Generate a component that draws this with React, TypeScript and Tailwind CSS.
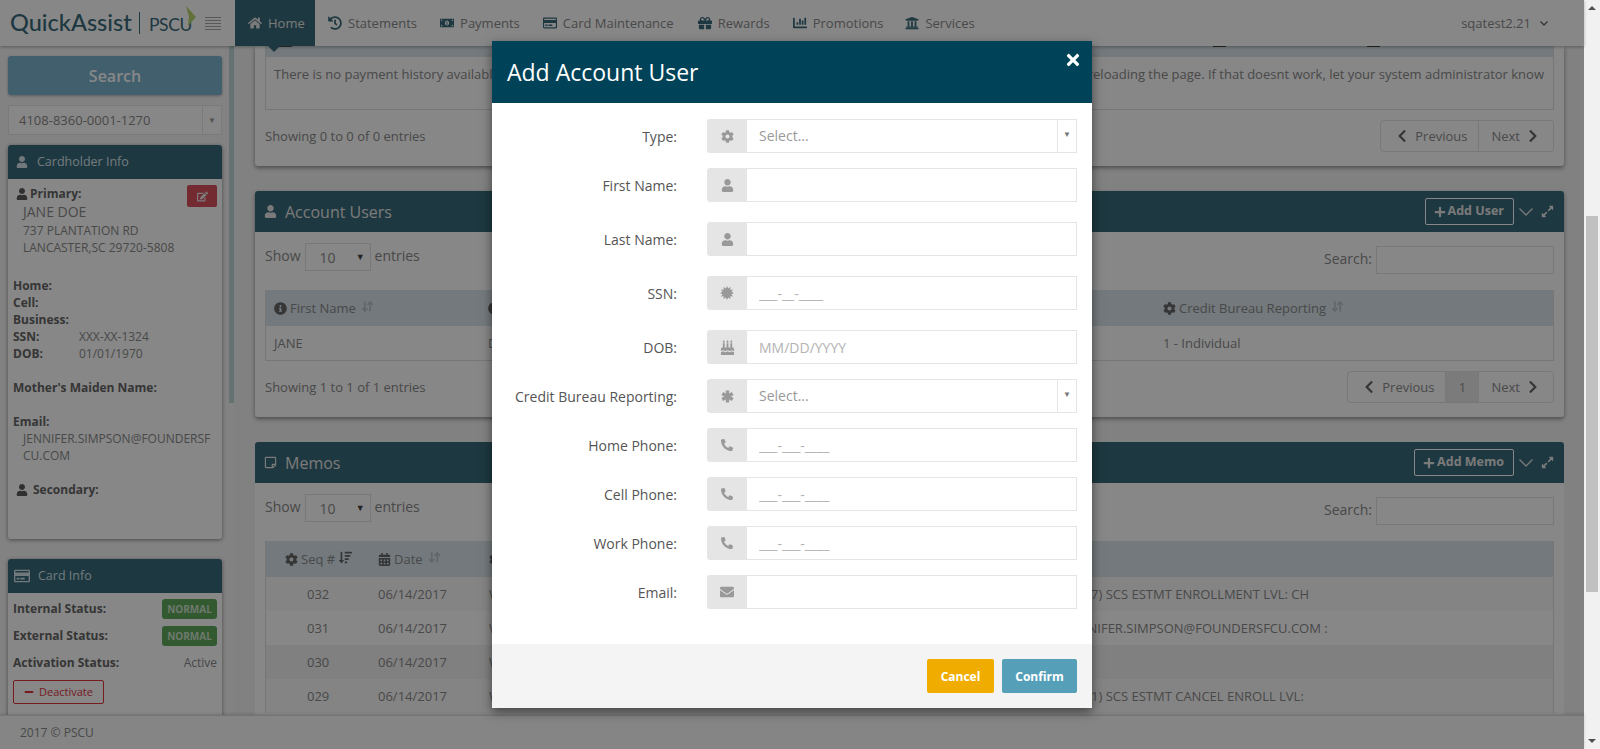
import React from "react";
import {
  FaUser, FaCog, FaBirthdayCake, FaPhone, FaEnvelope, FaHome, FaHistory,
  FaMoneyBillAlt, FaGift, FaChartBar, FaUniversity, FaEdit, FaInfoCircle, FaCalendarAlt,
  FaSortAmountDown, FaPlus, FaExpandAlt, FaChevronLeft, FaChevronRight, FaTimes, FaRegStickyNote, FaMinus, FaRegCreditCard,
} from "react-icons/fa";
import { ArrowDownUp } from "lucide-react";

const nav: [React.ReactNode, string, string][] = [
  [<FaHistory />, "Statements", "ml-[13px] mr-[11px]"],
  [<FaMoneyBillAlt />, "Payments", "ml-[12px] mr-[12px]"],
  [<FaRegCreditCard />, "Card Maintenance", "ml-[11px] mr-[12px]"],
  [<FaGift />, "Rewards", "ml-[12px] mr-[12px]"],
  [<FaChartBar />, "Promotions", "ml-[11px] mr-[11px]"],
  [<FaUniversity />, "Services", "ml-[11px] mr-0"],
];

function Chevron({ w, h, cls }: { w: number; h: number; cls: string }) {
  return (
    <svg width={w} height={h} viewBox={`0 0 ${w} ${h}`} className={cls} fill="none" stroke="currentColor" strokeWidth="1.3">
      <polyline points={`0.5,0.5 ${w / 2},${h - 1} ${w - 0.5},0.5`} />
    </svg>
  );
}

function Cert() {
  const pts: string[] = [];
  for (let i = 0; i < 24; i++) {
    const r = i % 2 === 0 ? 7 : 4.6;
    const a = (Math.PI * i) / 12;
    pts.push(`${7 + r * Math.sin(a)},${7 - r * Math.cos(a)}`);
  }
  return (
    <svg width="14" height="14" viewBox="0 0 14 14" fill="currentColor">
      <polygon points={pts.join(" ")} />
    </svg>
  );
}

function Star() {
  return (
    <svg width="13" height="13" viewBox="0 0 13 13" stroke="currentColor" strokeWidth="3.4">
      <line x1="6.5" y1="0.5" x2="6.5" y2="12.5" />
      <line x1="1.3" y1="3.5" x2="11.7" y2="9.5" />
      <line x1="1.3" y1="9.5" x2="11.7" y2="3.5" />
    </svg>
  );
}

function Sort() {
  return <ArrowDownUp size={13} strokeWidth={3} className="text-[#b4c2ca] ml-[2px] -mt-1" />;
}

function PanelHead({ icon, title, btn }: { icon: React.ReactNode; title: string; btn: string }) {
  return (
    <div className="h-[41px] bg-[#386a7a] flex items-center pl-[9px] pr-[10px] text-[#e6e6e6]">
      <span className="text-[13px] w-[21px] shrink-0">{icon}</span>
      <span className="text-[16px] flex-1">{title}</span>
      <span className="h-[27px] pl-[8px] pr-[9px] border border-white rounded-[2px] flex items-center gap-[2px] text-[12.5px] font-bold">
        <FaPlus className="text-[12px]" /> {btn}
      </span>
      <Chevron w={14} h={8} cls="ml-[5px]" />
      <FaExpandAlt className="text-[13px] ml-[8px]" />
    </div>
  );
}

function LengthRow() {
  return (
    <div className="flex justify-between px-[10px] pt-[11px]">
      <div className="flex items-center h-[28px] text-[14px]">
        <span className="pb-[4px]">Show</span>
        <span className="mx-[4px] w-[66px] h-[28px] border border-[#e2e2e2] flex items-center justify-between pl-[14px] pr-[5px] text-[14px]">
          <span className="pt-[1px]">10</span> <span className="text-[9px] text-[#444]">▼</span>
        </span>
        <span className="pb-[4px]">entries</span>
      </div>
      <div className="flex items-center mt-[3px] h-[28px] text-[14px]">
        <span className="mr-[4px] pb-[3px]">Search:</span>
        <span className="w-[178px] h-[28px] border border-[#e2e2e2]" />
      </div>
    </div>
  );
}

function Pager({ one }: { one?: boolean }) {
  return (
    <div className="flex h-[32px] border border-[#e2e2e2] rounded-[4px] text-[13px] text-[#8d8d8d]">
      <span className="flex items-center gap-[6px] pl-[14px] pr-[11px] border-r border-[#e2e2e2]">
        <FaChevronLeft className="text-[#666] text-[14px]" /> <span className="pt-px">Previous</span>
      </span>
      {one && <span className="w-[33px] pt-px flex items-center justify-center bg-[#e8e8e8] border-r border-[#e2e2e2]">1</span>}
      <span className="flex items-center gap-[6px] pl-[12px] pr-[13px]">
        <span className="pt-px">Next</span> <FaChevronRight className="text-[#666] text-[14px]" />
      </span>
    </div>
  );
}

function Side({ label, children }: { label: string; children?: React.ReactNode }) {
  return (
    <div className="flex h-[17px] leading-[17px] text-[12px]">
      <b className="w-[66px] shrink-0 font-bold text-[#666] whitespace-nowrap">{label}</b>
      <span>{children}</span>
    </div>
  );
}

function Status({ label, children }: { label: string; children: React.ReactNode }) {
  return (
    <div className="flex justify-between items-center h-[20px] mb-[7px]">
      <b className="text-[12px] font-bold text-[#666] pb-px">{label}</b>
      {children}
    </div>
  );
}

const Normal = () => (
  <span className="w-[55px] h-[20px] rounded-[3px] bg-[#5fa85c] text-[#cfe3cd] text-[10px] font-bold flex items-center justify-center">NORMAL</span>
);

function Field({ label, icon, ph, select, mb }: { label: string; icon: React.ReactNode; ph?: string; select?: boolean; mb: string }) {
  return (
    <div className={`flex items-center h-[34px] ${mb}`}>
      <label className="w-[170px] text-right text-[14px] text-[#555] mr-[30px] whitespace-nowrap pt-px">{label}</label>
      <div className="w-[370px] h-[34px] flex">
        <span className="w-[40px] shrink-0 bg-[#e5e5e5] rounded-l-[3px] flex items-center justify-center text-[#999] text-[13px]">{icon}</span>
        {select ? (
          <div className="flex-1 flex border border-l-0 border-[#e5e5e5] text-[14px] text-[#999]">
            <span className="flex-1 pl-[12px] leading-[31px] border-r border-[#e5e5e5]">{ph}</span>
            <span className="w-[18px] text-center text-[8px] leading-[28px] text-[#777]">▼</span>
          </div>
        ) : (
          <input
            readOnly
            placeholder={ph}
            className="flex-1 min-w-0 border border-l-0 border-[#e5e5e5] pl-[12px] pt-px text-[14px] placeholder:text-[#b3b3b3] outline-none bg-white"
          />
        )}
      </div>
    </div>
  );
}

const memos = [
  ["032", "bg-[#fafafa]", "7) SCS ESTMT ENROLLMENT LVL: CH", ""],
  ["031", "bg-white", "JENNIFER.SIMPSON@FOUNDERSFCU.COM :", "-ml-[24px]"],
  ["030", "bg-[#f1f1f1]", "", ""],
  ["029", "bg-[#fafafa]", "1) SCS ESTMT CANCEL ENROLL LVL:", ""],
];

export default function App() {
  return (
    <div className="relative h-[749px] w-[1600px] flex overflow-hidden font-['Open_Sans',sans-serif] text-[#8a8a8a]">
      <div className="relative w-[1584px] h-[749px] flex flex-col bg-[#f3f3f3]">
        {/* top bar */}
        <header className="relative z-10 h-[46px] shrink-0 bg-white flex items-center shadow-[0_1px_3px_rgba(0,0,0,0.3)]">
          <div className="w-[235px] shrink-0 flex items-center pl-[10px] text-[#386a7a]">
            <span className="w-[120px] font-['Lato',sans-serif] text-[23.5px] font-medium leading-none whitespace-nowrap">QuickAssist</span>
            <span className="w-px h-[22px] bg-[#386a7a] ml-[9px] mr-[9px]" />
            <span className="relative w-[41px] font-['Lato',sans-serif] text-[17.5px] tracking-[-0.4px] leading-none mt-[3px]">
              PSCU
              <svg viewBox="0 0 11 20" className="absolute -right-[7px] -top-[10px] w-[11px] h-[20px]">
                <path d="M0 0 L10 11 L2 20 L3 11 Z" fill="#b7d56d" />
              </svg>
            </span>
            <span className="ml-[15px] w-[16px] h-[13px] flex flex-col justify-between">
              <i className="block h-px bg-[#a8a8a8]" /><i className="block h-px bg-[#a8a8a8]" /><i className="block h-px bg-[#a8a8a8]" /><i className="block h-px bg-[#a8a8a8]" /><i className="block h-px bg-[#a8a8a8]" />
            </span>
          </div>
          <div className="relative w-[80px] h-[46px] bg-[#386a7a] text-[#e6e6e6] flex items-center pl-[13px] gap-[6px] text-[13px]">
            <FaHome className="text-[14px]" /> <span className="pt-px">Home</span>
            <span className="absolute left-[33px] top-[46px] border-x-[6px] border-x-transparent border-t-[6px] border-t-[#386a7a]" />
          </div>
          {nav.map(([ic, t, m]) => (
            <div key={t} className={`flex items-center gap-[6px] text-[13px] whitespace-nowrap ${m}`}>
              <span className="text-[#386a7a] text-[14px]">{ic}</span>
              <span className="pt-px">{t}</span>
            </div>
          ))}
          <div className="ml-auto mr-[36px] flex items-center text-[13px]">
            <span className="pt-px">sqatest2.21</span> <Chevron w={8} h={5} cls="ml-[9px] text-[#666]" />
          </div>
        </header>

        <div className="flex-1 min-h-0 flex overflow-hidden">
          {/* sidebar */}
          <aside className="relative w-[234px] shrink-0 overflow-hidden bg-[#f6f6f6] pl-[8px] pr-[12px] pt-[10px]">
            <div className="h-[39px] bg-[#7db4cf] rounded-[3px] flex items-center justify-center text-white text-[16px] font-semibold shadow-[0_1px_3px_rgba(0,0,0,0.3)]">Search</div>
            <div className="mt-[10px] h-[30px] flex border border-[#e8e8e8] bg-white text-[13px]">
              <span className="flex-1 pl-[10px] leading-[28px] border-r border-[#e8e8e8]">4108-8360-0001-1270</span>
              <span className="w-[18px] text-center text-[8px] leading-[27px] text-[#999]">▼</span>
            </div>

            <div className="mt-[10px] h-[394px] bg-white rounded-[3px] shadow-[0_1px_4px_rgba(0,0,0,0.45)] overflow-hidden">
              <div className="h-[34px] bg-[#386a7a] text-[#d8e5ec] flex items-center pl-[8px] text-[12.5px]">
                <FaUser className="text-[12px] mr-[9px]" /><span className="pt-px">Cardholder Info</span>
              </div>
              <div className="relative px-[5px] pt-[6px] text-[12px]">
                <span className="absolute right-[5px] top-[6px] w-[30px] h-[22px] rounded-[2px] bg-[#d9505e] flex items-center justify-center text-[#e8e8e8] text-[11px]"><FaEdit /></span>
                <div className="flex items-center h-[17px] ml-[3px] font-bold text-[#666] gap-[2px]"><FaUser className="text-[12px] text-[#5c5c5c]" />Primary:</div>
                <div className="ml-[10px] h-[19px] leading-[19px] text-[14px]">JANE DOE</div>
                <div className="ml-[10px] h-[17px] mt-px leading-[17px]">737 PLANTATION RD</div>
                <div className="ml-[10px] h-[17px] leading-[17px]">LANCASTER,SC 29720-5808</div>
                <div className="h-[21px]" />
                <Side label="Home:" />
                <Side label="Cell:" />
                <Side label="Business:" />
                <Side label="SSN:">XXX-XX-1324</Side>
                <Side label="DOB:">01/01/1970</Side>
                <div className="h-[17px]" />
                <Side label="Mother's Maiden Name:" />
                <div className="h-[17px]" />
                <Side label="Email:" />
                <div className="ml-[10px] leading-[17px] break-all w-[190px]">JENNIFER.SIMPSON@FOUNDERSFCU.COM</div>
                <div className="h-[17px]" />
                <div className="flex items-center h-[17px] ml-[3px] font-bold text-[#666] gap-[5px]"><FaUser className="text-[12px] text-[#5c5c5c]" />Secondary:</div>
              </div>
            </div>

            <div className="mt-[20px] h-[200px] bg-white rounded-[3px] shadow-[0_1px_4px_rgba(0,0,0,0.45)] overflow-hidden">
              <div className="h-[34px] bg-[#386a7a] text-[#d8e5ec] flex items-center pl-[6px] text-[12.5px]">
                <FaRegCreditCard className="text-[16px] w-[16px] mr-[8px]" /><span className="pt-px">Card Info</span>
              </div>
              <div className="px-[5px] pt-[6px]">
                <Status label="Internal Status:"><Normal /></Status>
                <Status label="External Status:"><Normal /></Status>
                <Status label="Activation Status:"><span className="text-[12px]">Active</span></Status>
                <div className="mt-[7px] w-[91px] h-[24px] border border-[#e0343f] rounded-[2px] flex items-center justify-center gap-[5px] text-[11px] text-[#e0343f]">
                  <FaMinus className="text-[10px]" />Deactivate
                </div>
              </div>
            </div>
            <span className="absolute right-0 top-0 w-[5px] h-[357px] bg-[#c0d6d8]" />
          </aside>

          {/* main */}
          <main className="flex-1 min-w-0 overflow-hidden pl-[21px] pr-[20px]">
            <section className="h-[120px] bg-white rounded-b-[3px] shadow-[0_2px_4px_rgba(0,0,0,0.4)] px-[10px] text-[13px]">
              <div className="h-[64px] border border-t-0 border-[#dfdfdf]">
                <div className="h-[11px] bg-[#d9e4ea] flex">
                  <i className="ml-[13px] block w-[13px] h-[1px] bg-[#555]" />
                  <i className="ml-[921px] block w-[13px] h-[1px] bg-[#444]" />
                  <i className="ml-[141px] block w-[13px] h-[1px] bg-[#444]" />
                </div>
                <div className="flex justify-between pl-[8px] pr-[9px] pt-[7px] leading-[20px]">
                  <span>There is no payment history available.</span>
                  <span>reloading the page. If that doesnt work, let your system administrator know</span>
                </div>
              </div>
              <div className="mt-[10px] flex items-center justify-between">
                <span className="pt-[2px]">Showing 0 to 0 of 0 entries</span>
                <Pager />
              </div>
            </section>

            <section className="mt-[25px] h-[226px] bg-white rounded-[3px] shadow-[0_2px_4px_rgba(0,0,0,0.4)] overflow-hidden">
              <PanelHead icon={<FaUser />} title="Account Users" btn="Add User" />
              <LengthRow />
              <div className="mx-[10px] mt-[16px] border border-t-0 border-[#dfdfdf] text-[13px]">
                <div className="h-[36px] pt-px bg-[#d9e4ea] grid grid-cols-[214px_675px_1fr] items-center">
                  <span className="pl-[8px] flex items-center gap-[3px]"><FaInfoCircle className="text-[#666] text-[13px]" />First Name<Sort /></span>
                  <span className="pl-[8px] flex items-center gap-[3px]"><FaInfoCircle className="text-[#666] text-[13px]" />Last Name<Sort /></span>
                  <span className="pl-[8px] flex items-center gap-[3px]"><FaCog className="text-[#666] text-[13px]" />Credit Bureau Reporting<Sort /></span>
                </div>
                <div className="h-[34px] pt-px grid grid-cols-[214px_675px_1fr] items-center">
                  <span className="pl-[8px]">JANE</span>
                  <span className="pl-[8px]">DOE</span>
                  <span className="pl-[8px]">1 - Individual</span>
                </div>
              </div>
              <div className="mt-[10px] mx-[10px] flex items-center justify-between text-[13px]">
                <span className="pt-[2px]">Showing 1 to 1 of 1 entries</span>
                <Pager one />
              </div>
            </section>

            <section className="mt-[25px] h-[300px] bg-white rounded-t-[3px] overflow-hidden">
              <PanelHead icon={<FaRegStickyNote />} title="Memos" btn="Add Memo" />
              <LengthRow />
              <div className="mx-[10px] mt-[16px] border-x border-[#dfdfdf] text-[13px]">
                <div className="h-[36px] pt-px bg-[#d9e4ea] grid grid-cols-[104px_111px_1fr] items-center">
                  <span className="pl-[19px] flex items-center gap-[3px]"><FaCog className="text-[#666] text-[13px]" />Seq #<FaSortAmountDown className="text-[#666] text-[13px] ml-[1px] -mt-1" /></span>
                  <span className="pl-[8px] flex items-center gap-[3px]"><FaCalendarAlt className="text-[#666] text-[13px]" />Date<Sort /></span>
                  <span className="pl-[8px]"><FaCog className="text-[#666] text-[13px]" /></span>
                </div>
                {memos.map(([s, bg, t, m]) => (
                  <div key={s} className={`h-[34px] pt-px grid grid-cols-[104px_111px_610px_1fr] items-center ${bg}`}>
                    <span className="pl-[41px]">{s}</span>
                    <span className="pl-[8px]">06/14/2017</span>
                    <span className="pl-[8px]">WEB</span>
                    <span className={`whitespace-nowrap ${m}`}>{t}</span>
                  </div>
                ))}
              </div>
            </section>
          </main>
        </div>

        <footer className="relative z-10 h-[34px] shrink-0 bg-[#fbfbfb] border-t border-[#dcdcdc] flex items-center pl-[20px] text-[12px] shadow-[0_-1px_3px_rgba(0,0,0,0.15)]">
          2017 © PSCU
        </footer>

        {/* backdrop */}
        <div className="absolute inset-0 z-20 bg-black/[0.47]" />

        {/* modal */}
        <div className="absolute z-30 top-[41px] left-[492px] w-[600px] h-[667px] bg-white flex flex-col shadow-[0_4px_10px_rgba(0,0,0,0.5)]">
          <div className="relative h-[62px] shrink-0 bg-[#004358] flex items-center pl-[15px] text-white text-[23px] font-normal">
            Add Account User
            <FaTimes className="absolute right-[10px] top-[10px] text-[18px]" />
          </div>
          <div className="flex-1 pt-[16px] pl-[15px] pr-[15px]">
            <Field label="Type:" icon={<FaCog />} ph="Select..." select mb="mb-[15px]" />
            <Field label="First Name:" icon={<FaUser className="text-[13px]" />} mb="mb-[20px]" />
            <Field label="Last Name:" icon={<FaUser className="text-[13px]" />} mb="mb-[20px]" />
            <Field label="SSN:" icon={<Cert />} ph="___-__-____" mb="mb-[20px]" />
            <Field label="DOB:" icon={<FaBirthdayCake className="text-[15px]" />} ph="MM/DD/YYYY" mb="mb-[15px]" />
            <Field label="Credit Bureau Reporting:" icon={<Star />} ph="Select..." select mb="mb-[15px]" />
            <Field label="Home Phone:" icon={<FaPhone className="-scale-x-100 text-[12px]" />} ph="___-___-____" mb="mb-[15px]" />
            <Field label="Cell Phone:" icon={<FaPhone className="-scale-x-100 text-[12px]" />} ph="___-___-____" mb="mb-[15px]" />
            <Field label="Work Phone:" icon={<FaPhone className="-scale-x-100 text-[12px]" />} ph="___-___-____" mb="mb-[15px]" />
            <Field label="Email:" icon={<FaEnvelope className="text-[14px]" />} mb="mb-0" />
          </div>
          <div className="h-[64px] shrink-0 bg-[#f4f4f4] flex justify-end items-start pt-[15px] pr-[15px] gap-[8px] text-white text-[12px] font-bold">
            <span className="w-[67px] h-[34px] pt-[2px] bg-[#f0ad00] rounded-[2px] flex items-center justify-center">Cancel</span>
            <span className="w-[75px] h-[34px] pt-[2px] bg-[#569fb9] rounded-[2px] flex items-center justify-center">Confirm</span>
          </div>
        </div>
      </div>

      {/* browser scrollbar */}
      <div className="w-[16px] h-[749px] bg-[#f1f1f1] relative shrink-0 flex flex-col items-center justify-between py-[6px]">
        <span className="border-x-[4px] border-x-transparent border-b-[4px] border-b-[#505050]" />
        <span className="absolute left-[2px] top-[216px] w-[12px] h-[376px] bg-[#c1c1c1]" />
        <span className="border-x-[4px] border-x-transparent border-t-[4px] border-t-[#505050]" />
      </div>
    </div>
  );
}
